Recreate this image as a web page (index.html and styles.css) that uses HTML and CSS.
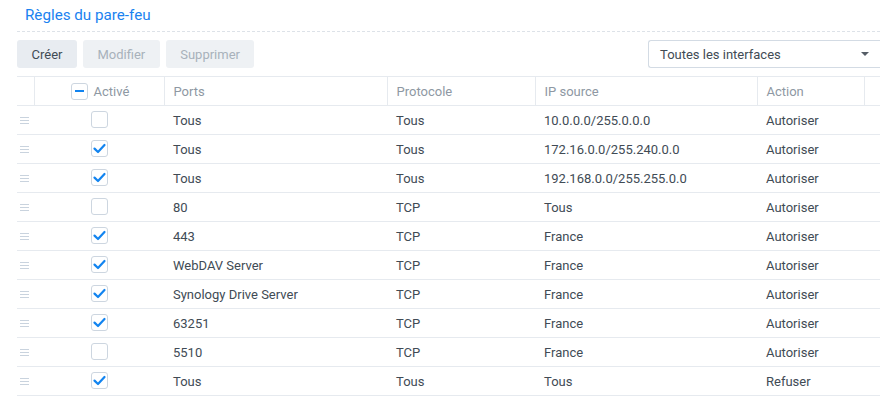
FILE: index.html
```html
<!DOCTYPE html>
<html lang="fr">
<head>
  <meta charset="UTF-8">
  <title>Règles du pare-feu</title>
  <link rel="stylesheet" href="styles.css">
</head>
<body>
  <div class="panel">
    <h1 class="title">Règles du pare-feu</h1>

    <div class="toolbar">
      <div class="actions">
        <button class="btn">Créer</button>
        <button class="btn disabled">Modifier</button>
        <button class="btn disabled">Supprimer</button>
      </div>
      <div class="select">
        <span>Toutes les interfaces</span>
        <span class="caret"></span>
      </div>
    </div>

    <table class="rules">
      <colgroup>
        <col class="c-drag"><col class="c-on"><col class="c-ports"><col class="c-proto"><col class="c-ip"><col class="c-act"><col>
      </colgroup>
      <thead>
        <tr>
          <th></th>
          <th class="on-head"><div class="on-label"><span class="check partial"></span>Activé</div></th>
          <th>Ports</th>
          <th>Protocole</th>
          <th>IP source</th>
          <th>Action</th>
          <th class="last"></th>
        </tr>
      </thead>
      <tbody id="rows"></tbody>
    </table>
  </div>

  <script>
    const rules = [
      [false, 'Tous', 'Tous', '10.0.0.0/255.0.0.0', 'Autoriser'],
      [true, 'Tous', 'Tous', '172.16.0.0/255.240.0.0', 'Autoriser'],
      [true, 'Tous', 'Tous', '192.168.0.0/255.255.0.0', 'Autoriser'],
      [false, '80', 'TCP', 'Tous', 'Autoriser'],
      [true, '443', 'TCP', 'France', 'Autoriser'],
      [true, 'WebDAV Server', 'TCP', 'France', 'Autoriser'],
      [true, 'Synology Drive Server', 'TCP', 'France', 'Autoriser'],
      [true, '63251', 'TCP', 'France', 'Autoriser'],
      [false, '5510', 'TCP', 'France', 'Autoriser'],
      [true, 'Tous', 'Tous', 'Tous', 'Refuser']
    ];

    const tick = '<svg viewBox="0 0 17 17" width="17" height="17"><path d="M3.5 8.6 L7 12 L13.5 5" fill="none" stroke="#1284f0" stroke-width="2.2" stroke-linecap="round" stroke-linejoin="round"/></svg>';

    document.getElementById('rows').innerHTML = rules.map(r => `
      <tr>
        <td><span class="grip"></span></td>
        <td class="on"><span class="check">${r[0] ? tick : ''}</span></td>
        <td>${r[1]}</td>
        <td>${r[2]}</td>
        <td>${r[3]}</td>
        <td>${r[4]}</td>
        <td></td>
      </tr>
    `).join('');
  </script>
</body>
</html>
```

FILE: styles.css
```css
* {
  margin: 0;
  padding: 0;
  box-sizing: border-box;
}

body {
  font-family: Roboto, 'Liberation Sans', sans-serif;
  font-size: 13px;
  color: #414b55;
  background: #fff;
}

.panel {
  padding-left: 17px;
}

.title {
  font-size: 15.2px;
  font-weight: 400;
  color: #1a82f0;
  padding: 6px 0 0 8px;
  height: 32px;
  border-bottom: 1px dashed #dde2e8;
}

.toolbar {
  display: flex;
  justify-content: space-between;
  align-items: center;
  height: 44px;
}

.actions {
  display: flex;
  gap: 6px;
}

.btn {
  font-family: inherit;
  font-size: 13px;
  height: 28px;
  border: none;
  border-radius: 3px;
  background: #e8ecf1;
  color: #414b55;
  padding: 0 14.5px;
}

.btn.disabled {
  background: #eef1f4;
  color: #a8b1bb;
}

.select {
  width: 232px;
  height: 28px;
  border: 1px solid #d3dbe4;
  border-right: none;
  border-radius: 3px 0 0 3px;
  display: flex;
  align-items: center;
  justify-content: space-between;
  padding: 0 11px 0 11px;
  color: #414b55;
}

.caret {
  width: 0;
  height: 0;
  border-left: 4px solid transparent;
  border-right: 4px solid transparent;
  border-top: 4px solid #555d66;
}

.rules {
  width: 863px;
  border-collapse: collapse;
  table-layout: fixed;
}

.c-drag { width: 17px; }
.c-on { width: 130px; }
.c-ports { width: 223px; }
.c-proto { width: 148px; }
.c-ip { width: 222px; }
.c-act { width: 107px; }

th, td {
  height: 29px;
  text-align: left;
  font-weight: 400;
  padding: 0 9px;
  border-bottom: 1px solid #e6eaef;
  white-space: nowrap;
}

th {
  color: #8e98a3;
  border-top: 1px solid #e6eaef;
  border-right: 1px solid #e6eaef;
}

th.last {
  border-right: none;
}

th:first-child,
td:first-child {
  padding: 0 0 0 3px;
}

.on-head {
  padding-left: 36px;
}

.on-label {
  display: flex;
  align-items: center;
  gap: 6px;
}

td.on {
  text-align: center;
  padding: 0;
}

.check {
  display: inline-block;
  width: 17px;
  height: 17px;
  border: 1px solid #cdd6e0;
  border-radius: 3px;
  vertical-align: middle;
  position: relative;
  top: -1px;
}

.on-label .check {
  top: 0;
}

.check svg {
  display: block;
  margin: -1px;
}

.check.partial::after {
  content: '';
  position: absolute;
  left: 3px;
  top: 6px;
  width: 9px;
  height: 2px;
  background: #1284f0;
}

.grip {
  display: block;
  width: 9px;
  height: 7px;
  border-top: 1px solid #c9d3de;
  border-bottom: 1px solid #c9d3de;
  position: relative;
}

.grip::after {
  content: '';
  position: absolute;
  left: 0;
  right: 0;
  top: 2px;
  border-top: 1px solid #c9d3de;
}
```
